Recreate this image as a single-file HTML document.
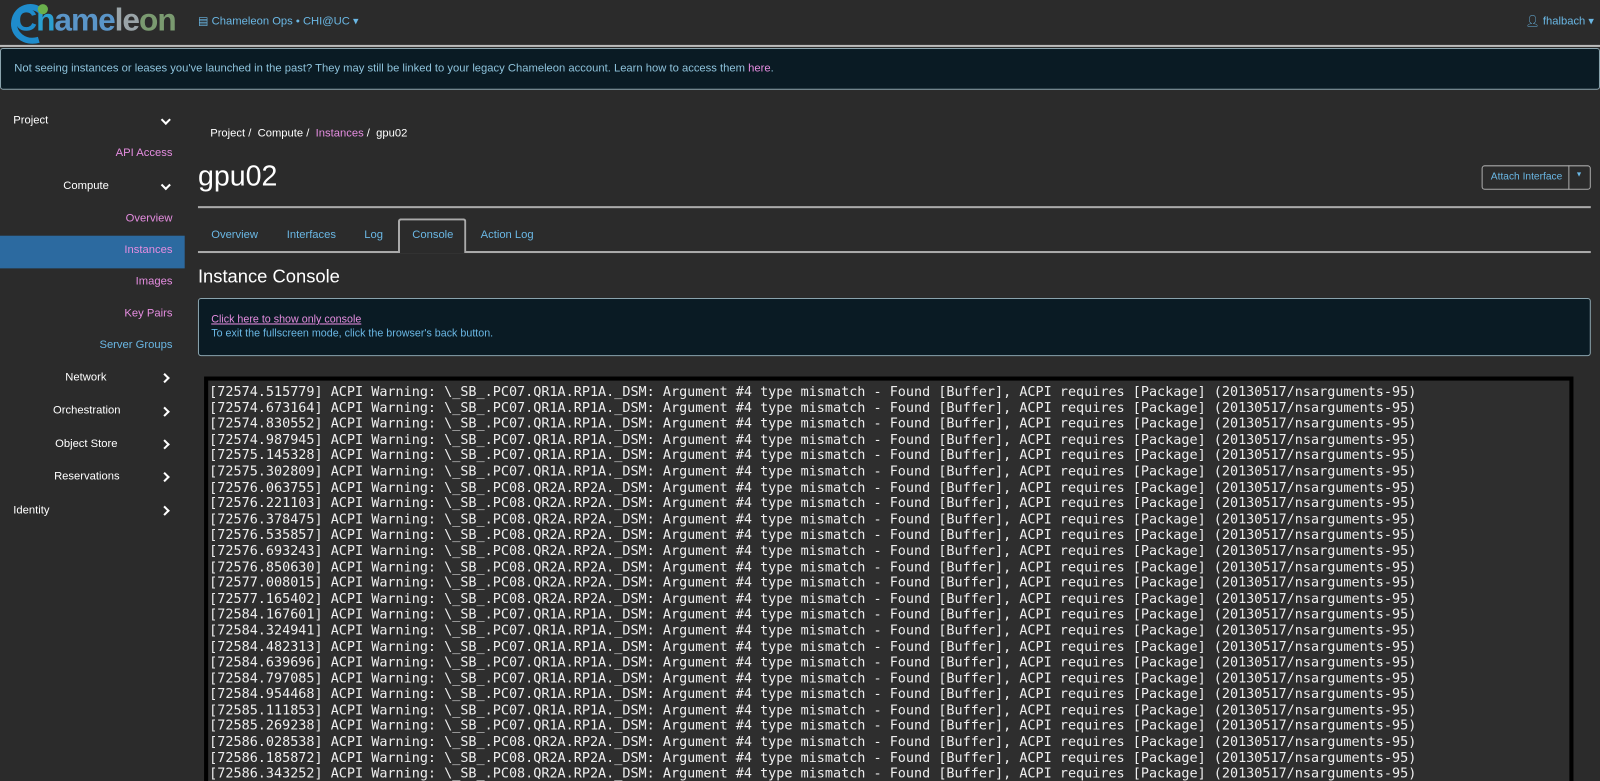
<!DOCTYPE html>
<html><head><meta charset="utf-8"><style>
*{box-sizing:border-box;margin:0;padding:0}
html,body{width:1600px;height:781px;overflow:hidden;background:#2b2b2b}
#w{width:1568px;height:766px;position:relative;transform:scale(1.0204);transform-origin:0 0;font-family:"Liberation Sans",sans-serif;font-size:11px;color:#fff}
.a{position:absolute}
.nav{left:0;top:0;width:1568px;height:46px;border-bottom:2px solid #bbb}
.banner{left:0;top:47px;width:1568px;height:41px;background:#0a1b24;border:1px solid #8aa3ad;border-radius:3px;color:#8ec3dc;padding:13px 0 0 13px}
.banner b{font-weight:normal;color:#e58de0}
.side div{position:absolute;font-size:11px}
.pink{color:#e58de0}.blue{color:#6ab7e4}
.chev{position:absolute;width:7px;height:7px;border-right:2px solid #fff;border-bottom:2px solid #fff}
.tab{position:absolute;top:224px;font-size:11px;color:#6ab7e4}
pre{font-family:"DejaVu Sans Mono",monospace;font-size:13.2px;line-height:15.6px;color:#eee;white-space:pre}
</style></head><body><div id="w">
<div class="a nav"></div>
<div class="a" style="left:14px;top:2px;font-size:31px;font-weight:bold;letter-spacing:-1px;">
<span style="color:#1f8ccc">C</span><span style="color:#2a9fd0">h</span><span style="color:#5a95c8">ame</span><span style="color:#9aa4a8">le</span><span style="color:#7a9a70">on</span></div>
<svg class="a" style="left:10px;top:1px" width="44" height="44"><path d="M30 10 C22 2 6 6 4 20 C2 32 14 42 28 38" fill="none" stroke="#1f8ccc" stroke-width="6"/><circle cx="32" cy="8" r="5" fill="#6ab04c"/></svg>
<div class="a blue" style="left:194px;top:14px;font-size:11px">&#9636; Chameleon Ops • CHI@UC ▾</div>
<div class="a blue" style="left:1495px;top:14px;font-size:11px">&#128100;&#xFE0E; fhalbach ▾</div>
<div class="a banner">Not seeing instances or leases you've launched in the past? They may still be linked to your legacy Chameleon account. Learn how to access them <b>here</b>.</div>
<div class="side">
<div style="left:13px;top:112px">Project</div><span class="chev" style="left:159px;top:114px;transform:rotate(45deg)"></span>
<div class="pink" style="right:1399px;top:144px">API Access</div>
<div style="left:62px;top:176px">Compute</div><span class="chev" style="left:159px;top:178px;transform:rotate(45deg)"></span>
<div class="pink" style="right:1399px;top:208px">Overview</div>
<div style="left:0;top:231px;width:181px;height:32px;background:#2c6aa0"></div>
<div class="pink" style="right:1399px;top:239px">Instances</div>
<div class="pink" style="right:1399px;top:270px">Images</div>
<div class="pink" style="right:1399px;top:301px">Key Pairs</div>
<div class="blue" style="right:1399px;top:332px">Server Groups</div>
<div style="left:64px;top:364px">Network</div><span class="chev" style="left:158px;top:367px;transform:rotate(-45deg)"></span>
<div style="left:52px;top:396px">Orchestration</div><span class="chev" style="left:158px;top:400px;transform:rotate(-45deg)"></span>
<div style="left:54px;top:429px">Object Store</div><span class="chev" style="left:158px;top:432px;transform:rotate(-45deg)"></span>
<div style="left:53px;top:461px">Reservations</div><span class="chev" style="left:158px;top:464px;transform:rotate(-45deg)"></span>
<div style="left:13px;top:494px">Identity</div><span class="chev" style="left:158px;top:497px;transform:rotate(-45deg)"></span>
</div>
<div class="a" style="left:206px;top:125px">Project / &nbsp;Compute / &nbsp;<span class="pink">Instances</span> / &nbsp;gpu02</div>
<div class="a" style="left:194px;top:157px;font-size:28px">gpu02</div>
<div class="a" style="left:194px;top:202px;width:1365px;height:2px;background:#aaa"></div>
<div class="a" style="left:1452px;top:162px;width:107px;height:24px;border:1px solid #aaa;border-radius:3px"></div>
<div class="a" style="left:1537px;top:162px;width:1px;height:24px;background:#aaa"></div>
<div class="a blue" style="left:1461px;top:168px;font-size:10px">Attach Interface</div>
<div class="a blue" style="left:1544px;top:168px;font-size:7px">▼</div>
<div class="a" style="left:194px;top:246px;width:1365px;height:2px;background:#aaa"></div>
<div class="a" style="left:390px;top:214px;width:67px;height:34px;border:2px solid #aaa;border-bottom:none;border-radius:3px 3px 0 0;background:#2b2b2b"></div>
<div class="tab" style="left:207px">Overview</div>
<div class="tab" style="left:281px">Interfaces</div>
<div class="tab" style="left:357px">Log</div>
<div class="tab" style="left:404px">Console</div>
<div class="tab" style="left:471px">Action Log</div>
<div class="a" style="left:194px;top:261px;font-size:18px">Instance Console</div>
<div class="a" style="left:194px;top:292px;width:1365px;height:57px;background:#0a1b24;border:1px solid #8aa3ad;border-radius:3px;padding:13px 0 0 12px;color:#6ab7e4;font-size:10.5px;line-height:14px">
<span style="color:#e58de0;text-decoration:underline">Click here to show only console</span><br>To exit the fullscreen mode, click the browser's back button.</div>
<div class="a" style="left:200px;top:369px;width:1342px;height:420px;border:4px solid #000;background:#2e2e2e;padding:4px 0 0 1px;overflow:hidden">
<pre>[72574.515779] ACPI Warning: \_SB_.PC07.QR1A.RP1A._DSM: Argument #4 type mismatch - Found [Buffer], ACPI requires [Package] (20130517/nsarguments-95)
[72574.673164] ACPI Warning: \_SB_.PC07.QR1A.RP1A._DSM: Argument #4 type mismatch - Found [Buffer], ACPI requires [Package] (20130517/nsarguments-95)
[72574.830552] ACPI Warning: \_SB_.PC07.QR1A.RP1A._DSM: Argument #4 type mismatch - Found [Buffer], ACPI requires [Package] (20130517/nsarguments-95)
[72574.987945] ACPI Warning: \_SB_.PC07.QR1A.RP1A._DSM: Argument #4 type mismatch - Found [Buffer], ACPI requires [Package] (20130517/nsarguments-95)
[72575.145328] ACPI Warning: \_SB_.PC07.QR1A.RP1A._DSM: Argument #4 type mismatch - Found [Buffer], ACPI requires [Package] (20130517/nsarguments-95)
[72575.302809] ACPI Warning: \_SB_.PC07.QR1A.RP1A._DSM: Argument #4 type mismatch - Found [Buffer], ACPI requires [Package] (20130517/nsarguments-95)
[72576.063755] ACPI Warning: \_SB_.PC08.QR2A.RP2A._DSM: Argument #4 type mismatch - Found [Buffer], ACPI requires [Package] (20130517/nsarguments-95)
[72576.221103] ACPI Warning: \_SB_.PC08.QR2A.RP2A._DSM: Argument #4 type mismatch - Found [Buffer], ACPI requires [Package] (20130517/nsarguments-95)
[72576.378475] ACPI Warning: \_SB_.PC08.QR2A.RP2A._DSM: Argument #4 type mismatch - Found [Buffer], ACPI requires [Package] (20130517/nsarguments-95)
[72576.535857] ACPI Warning: \_SB_.PC08.QR2A.RP2A._DSM: Argument #4 type mismatch - Found [Buffer], ACPI requires [Package] (20130517/nsarguments-95)
[72576.693243] ACPI Warning: \_SB_.PC08.QR2A.RP2A._DSM: Argument #4 type mismatch - Found [Buffer], ACPI requires [Package] (20130517/nsarguments-95)
[72576.850630] ACPI Warning: \_SB_.PC08.QR2A.RP2A._DSM: Argument #4 type mismatch - Found [Buffer], ACPI requires [Package] (20130517/nsarguments-95)
[72577.008015] ACPI Warning: \_SB_.PC08.QR2A.RP2A._DSM: Argument #4 type mismatch - Found [Buffer], ACPI requires [Package] (20130517/nsarguments-95)
[72577.165402] ACPI Warning: \_SB_.PC08.QR2A.RP2A._DSM: Argument #4 type mismatch - Found [Buffer], ACPI requires [Package] (20130517/nsarguments-95)
[72584.167601] ACPI Warning: \_SB_.PC07.QR1A.RP1A._DSM: Argument #4 type mismatch - Found [Buffer], ACPI requires [Package] (20130517/nsarguments-95)
[72584.324941] ACPI Warning: \_SB_.PC07.QR1A.RP1A._DSM: Argument #4 type mismatch - Found [Buffer], ACPI requires [Package] (20130517/nsarguments-95)
[72584.482313] ACPI Warning: \_SB_.PC07.QR1A.RP1A._DSM: Argument #4 type mismatch - Found [Buffer], ACPI requires [Package] (20130517/nsarguments-95)
[72584.639696] ACPI Warning: \_SB_.PC07.QR1A.RP1A._DSM: Argument #4 type mismatch - Found [Buffer], ACPI requires [Package] (20130517/nsarguments-95)
[72584.797085] ACPI Warning: \_SB_.PC07.QR1A.RP1A._DSM: Argument #4 type mismatch - Found [Buffer], ACPI requires [Package] (20130517/nsarguments-95)
[72584.954468] ACPI Warning: \_SB_.PC07.QR1A.RP1A._DSM: Argument #4 type mismatch - Found [Buffer], ACPI requires [Package] (20130517/nsarguments-95)
[72585.111853] ACPI Warning: \_SB_.PC07.QR1A.RP1A._DSM: Argument #4 type mismatch - Found [Buffer], ACPI requires [Package] (20130517/nsarguments-95)
[72585.269238] ACPI Warning: \_SB_.PC07.QR1A.RP1A._DSM: Argument #4 type mismatch - Found [Buffer], ACPI requires [Package] (20130517/nsarguments-95)
[72586.028538] ACPI Warning: \_SB_.PC08.QR2A.RP2A._DSM: Argument #4 type mismatch - Found [Buffer], ACPI requires [Package] (20130517/nsarguments-95)
[72586.185872] ACPI Warning: \_SB_.PC08.QR2A.RP2A._DSM: Argument #4 type mismatch - Found [Buffer], ACPI requires [Package] (20130517/nsarguments-95)
[72586.343252] ACPI Warning: \_SB_.PC08.QR2A.RP2A._DSM: Argument #4 type mismatch - Found [Buffer], ACPI requires [Package] (20130517/nsarguments-95)</pre>
</div>
</div></body></html>
